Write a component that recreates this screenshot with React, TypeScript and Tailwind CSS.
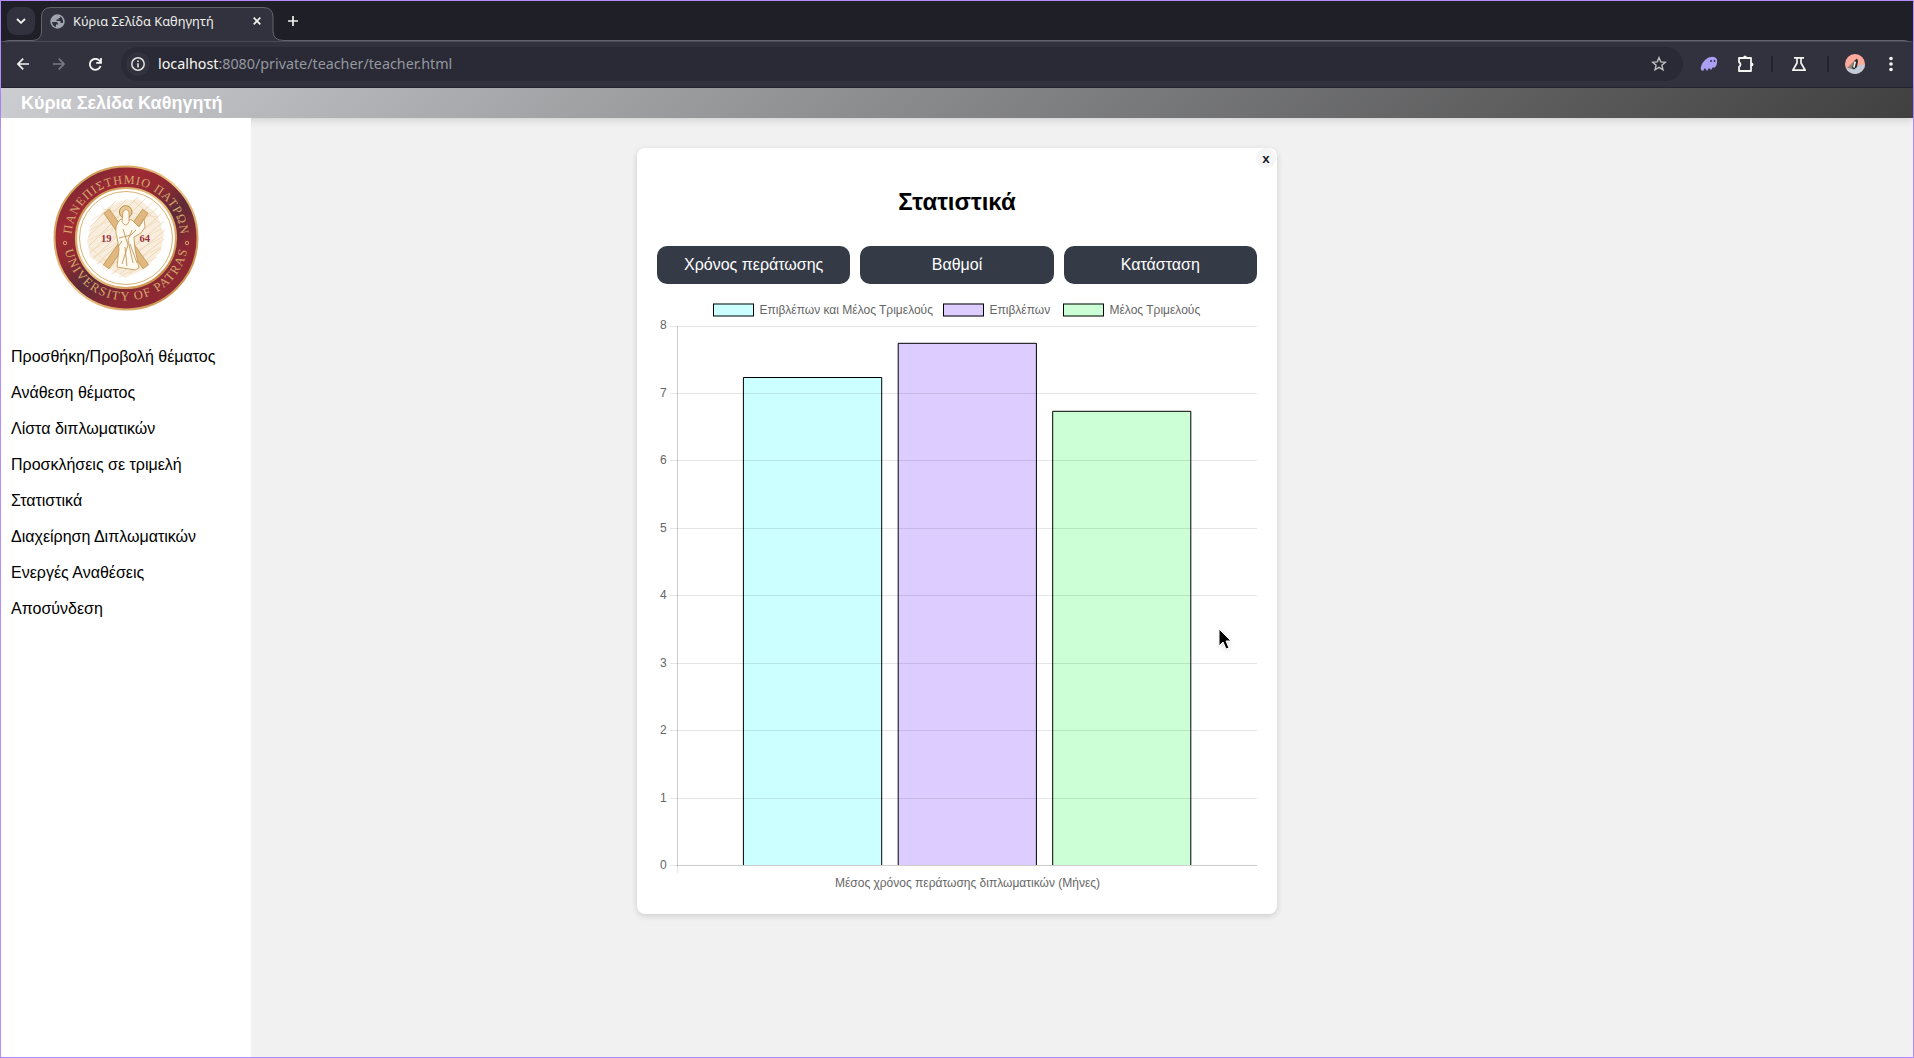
import React from "react";

const links = [
  "Προσθήκη/Προβολή θέματος",
  "Ανάθεση θέματος",
  "Λίστα διπλωματικών",
  "Προσκλήσεις σε τριμελή",
  "Στατιστικά",
  "Διαχείρηση Διπλωματικών",
  "Ενεργές Αναθέσεις",
  "Αποσύνδεση",
];

const bars = [
  { label: "Επιβλέπων και Μέλος Τριμελούς", left: 86.4, right: 224.7, top: 83.5, fill: "#00ffff", legendX: 56.5 },
  { label: "Επιβλέπων", left: 241.2, right: 379.4, top: 49.3, fill: "#5500ff", legendX: 286.5 },
  { label: "Μέλος Τριμελούς", left: 395.7, right: 533.8, top: 117.3, fill: "#00ff2b", legendX: 406.5 },
];

const ticks = [
  { v: 0, y: 571.5, base: 575 },
  { v: 1, y: 504.5, base: 508 },
  { v: 2, y: 436.5, base: 440 },
  { v: 3, y: 369.5, base: 373 },
  { v: 4, y: 301.5, base: 305 },
  { v: 5, y: 234.5, base: 238 },
  { v: 6, y: 166.5, base: 170 },
  { v: 7, y: 99.5, base: 103 },
  { v: 8, y: 32.5, base: 35 },
];

function Chart() {
  return (
    <svg width="600" height="600" className="block" fontFamily="'Liberation Sans', Arial, sans-serif" fontSize="12">
      {bars.map((b) => (
        <g key={b.label}>
          <rect x={b.legendX - 0.5} y="9.5" width="41" height="13" fill={b.fill} fillOpacity="0.2" />
          <rect x={b.legendX} y="10" width="40" height="12" fill="none" stroke="#000" />
          <text x={b.legendX + 46} y="20" fill="#666">{b.label}</text>
          <rect x={b.left} y={b.top} width={b.right - b.left} height={571 - b.top} fill={b.fill} fillOpacity="0.2" />
          <path d={`M${b.left} 571V${b.top}H${b.right}V571`} fill="none" stroke="#000" />
        </g>
      ))}
      {ticks.map((t) => (
        <g key={t.v}>
          <path d={`M13 ${t.y}H600`} stroke="#000" strokeOpacity="0.1" />
          <text x="9.6" y={t.base} textAnchor="end" fill="#666">{t.v}</text>
        </g>
      ))}
      <path d="M20.5 32V579" stroke="#000" strokeOpacity="0.1" />
      <path d="M20.5 32V572M20 571.5H600" stroke="#000" strokeOpacity="0.1" />
      <text x="310.5" y="593" textAnchor="middle" fill="#666">Μέσος χρόνος περάτωσης διπλωματικών (Μήνες)</text>
    </svg>
  );
}

function Seal() {
  return (
    <svg width="146" height="146" viewBox="0 0 146 146" fontFamily="'Liberation Serif', serif">
      <defs>
        <linearGradient id="ring" x1="0.1" y1="0" x2="0.9" y2="1">
          <stop offset="0" stopColor="#6b2632" />
          <stop offset="0.25" stopColor="#a02a34" />
          <stop offset="0.4" stopColor="#8f2a32" />
          <stop offset="0.55" stopColor="#5d2b37" />
          <stop offset="0.75" stopColor="#8c2832" />
          <stop offset="1" stopColor="#8f2a33" />
        </linearGradient>
        <linearGradient id="gold" x1="0" y1="0" x2="1" y2="1">
          <stop offset="0" stopColor="#c58b45" />
          <stop offset="0.5" stopColor="#efc98a" />
          <stop offset="1" stopColor="#bd7f3c" />
        </linearGradient>
        <path id="arcTop" d="M18.6 78A54.6 54.6 0 1 1 127.4 78" />
        <path id="arcBottom" d="M10.800 78A62.400 62.400 0 0 0 135.200 78" />
      </defs>
      <circle cx="73" cy="73" r="71.5" fill="url(#ring)" stroke="url(#gold)" strokeWidth="2" />
      <circle cx="73" cy="73" r="50" fill="#fff" stroke="url(#gold)" strokeWidth="2.2" />
      <circle cx="73" cy="73" r="46.5" fill="none" stroke="#dab272" strokeWidth="1" />
      <path d="M38 62L52 44L68 36L86 34L104 49L111 68L108 86L92 104L72 113L56 104L37 92L34 76Z" fill="#f7ead6" opacity="0.8" />
      <g stroke="#e5c99b" strokeWidth="1" fill="none" opacity="0.6">
        <path d="M37 62L63 36M35 72L74 34M36 81L85 32M37 88L92 34M40 94L100 37M44 99L104 43M49 102L108 49M53 106L111 56M59 109L112 65M67 109L111 74M76 109L108 83" />
        <path d="M39 55L60 42M35 66L68 50M36 75L91 48M38 86L96 50M40 92L104 56M44 99L108 64M50 104L110 72M58 109L108 82M66 112L104 92M36 82L54 97M80 35L109 60M49 44L105 52" strokeWidth="0.7" />
      </g>
      <g>
        <path d="M53.500 46L93 102M92.500 46L53 102" stroke="#c99b57" strokeWidth="7.500" />
        <path d="M53.900 46.600L92.600 101.400M92.100 46.600L53.400 101.400" stroke="#dfb981" strokeWidth="6" />
      </g>
      <circle cx="72.700" cy="47" r="6.300" fill="#e9cb98" stroke="#b98746" />
      <path d="M68 54C62 59 62 66 64 72L66 84L64 102L82 105L86 103L82 84L81 72L88 68L92 62L91 54L86 62L79 55Z" fill="#fffaf0" stroke="#c1904f" strokeWidth="0.8" />
      <path d="M70 47Q73 42 76 47L76 57Q73 63 69 57Z" fill="#fff8eb" stroke="#bb8848" strokeWidth="0.7" />
      <path d="M70 64L75 80L69 99M79 65L75 75L80 98M66 73L78 70L83 65M72 82L74 101M65 82L69 76M84 98L77 79" fill="none" stroke="#bd8c4b" strokeWidth="0.8" />
      <text x="48" y="76.500" fontSize="10.500" fontWeight="bold" fill="#98333d">19</text>
      <text x="86.500" y="76.500" fontSize="10.500" fontWeight="bold" fill="#98333d">64</text>
      <g fill="#d5a66c">
        <text fontSize="12.300"><textPath href="#arcTop" startOffset="50%" textAnchor="middle" textLength="163">ΠΑΝΕΠΙΣΤΗΜΙΟ ΠΑΤΡΩΝ</textPath></text>
        <text fontSize="12.600"><textPath href="#arcBottom" startOffset="50%" textAnchor="middle" textLength="171">UNIVERSITY OF PATRAS</textPath></text>
      </g>
      <circle cx="12" cy="78" r="1.700" fill="none" stroke="#d5a66c" />
      <circle cx="134" cy="78" r="1.700" fill="none" stroke="#d5a66c" />
    </svg>
  );
}

function TabStrip() {
  return (
    <div className="relative flex h-10 items-center bg-[#1f1f28] font-['Noto_Sans',sans-serif]">
      <svg className="absolute left-0 top-0" width="1912" height="41">
        <path d="M0 47Q0 40 8 39.500H31Q40 39.500 40.500 31V16Q40.500 6.500 50 6.500H262Q272 6.500 272 16V30Q272 39.500 283 39.500H1903Q1911 40 1911 47V41H0Z" fill="#31323e" stroke="#62636d" />
      </svg>
      <div className="relative ml-[6px] flex size-7 items-center justify-center rounded-[9px] bg-[#31323e]">
        <svg width="10" height="6" viewBox="0 0 10 6"><path d="M1 1l4 3.800L9 1" fill="none" stroke="#f4f4f0" strokeWidth="1.800" /></svg>
      </div>
      <svg className="relative ml-[15px]" width="15" height="15" viewBox="0 0 15 15">
        <circle cx="7.500" cy="7.500" r="7.200" fill="#a0a4ad" />
        <path d="M2 8H6C8 8 8 10 8 10.500H6V13C3.500 12.500 2 10 2 8M8 2H10V4H8.500V5.500H6.500V7H10.500V9H13L13 7Q12.500 3 9.500 2Z" fill="#31323e" />
      </svg>
      <span className="relative ml-[8px] text-[12.800px] leading-5 text-[#eeeeea]">Κύρια Σελίδα Καθηγητή</span>
      <svg className="absolute left-[252px] top-4" width="8" height="8" viewBox="0 0 8 8"><path d="M.700.700l6.600 6.600M7.300.700L.700 7.300" stroke="#f1f1ed" strokeWidth="1.700" /></svg>
      <svg className="absolute left-[287px] top-[15px]" width="10" height="10"><path d="M5 0v10M0 5h10" stroke="#f1f1ed" strokeWidth="1.700" /></svg>
    </div>
  );
}

function Toolbar() {
  return (
    <div className="flex h-[47px] items-center border-b border-[#252630] bg-[#31323e] font-['Noto_Sans',sans-serif]">
      <svg className="ml-4" width="12" height="12" viewBox="0 0 12 12" fill="none" stroke="#f4f4f0" strokeWidth="1.700"><path d="M12 6H1M6.200.600L.900 6l5.300 5.400" /></svg>
      <svg className="ml-6" width="12" height="12" viewBox="0 0 12 12" fill="none" stroke="#797a82" strokeWidth="1.700"><path d="M0 6h11M5.800.600L11.100 6l-5.300 5.400" /></svg>
      <svg className="ml-6" width="13" height="13" viewBox="0 0 13 13" fill="none" stroke="#f4f4f0" strokeWidth="1.800"><path d="M11.600 8A5.500 5.500 0 1 1 10.600 2.800L12 4.400M12 0v4.900H7.200" /></svg>
      <div className="ml-[19px] flex h-[34px] w-[1562px] items-center rounded-full bg-[#292a35] pl-[5px] pr-[16px]">
        <div className="flex size-6 items-center justify-center rounded-full bg-[#31323e]">
          <svg width="14" height="14" viewBox="0 0 14 14"><circle cx="7" cy="7" r="6.200" fill="none" stroke="#e4e4e1" strokeWidth="1.500" /><path d="M7 6.200V10.500M7 3.500V5" stroke="#e4e4e1" strokeWidth="1.600" /></svg>
        </div>
        <span className="mb-px ml-[8px] text-[14.300px] leading-5 text-[#9698a0]"><span className="text-[#f8f8f2]">localhost</span>:8080/private/teacher/teacher.html</span>
        <svg className="ml-auto" width="16" height="16" viewBox="0 0 16 16" fill="none" stroke="#c0c0bf" strokeWidth="1.400"><path d="M8 1.700l1.800 4.200 4.600.400-3.500 3 1.100 4.500L8 11.400l-4 2.400 1.100-4.500-3.500-3 4.600-.400z" /></svg>
      </div>
      <svg className="ml-[17px]" width="18" height="16" viewBox="0 0 18 16"><path d="M1 14Q0 9 5 4Q9 0 14 1Q18 2 17 7Q17 10 14 12L13 11L11 14L9 12L7 15L5 12L3 15Z" fill="#aaa0f3" /><path d="M11 4v2M14.500 4v2" stroke="#34334c" strokeWidth="1.500" /></svg>
      <svg className="ml-[19px]" width="18" height="18" viewBox="0 0 18 18"><path d="M2 3H14V16H2V12Q5 9.500 2 7Z" fill="none" stroke="#f4f4f0" strokeWidth="1.800" strokeLinejoin="round" /><path d="M6 3a2 2.500 0 0 1 4 0ZM14 7.500a2.500 2 0 0 1 0 4Z" fill="#f4f4f0" /></svg>
      <i className="ml-[16px] h-4 w-[2px] bg-[#22232c]" />
      <svg className="ml-[18px]" width="16" height="16" viewBox="0 0 16 16"><path d="M3 1.800H13M6 2V7L1.800 14.200H14.200L10 7V2" fill="none" stroke="#f4f4f0" strokeWidth="1.700" strokeLinejoin="round" /></svg>
      <i className="ml-[20px] h-4 w-[2px] bg-[#22232c]" />
      <svg className="ml-[16px]" width="20" height="20" viewBox="0 0 20 20"><defs><clipPath id="avatar"><circle cx="10" cy="10" r="10" /></clipPath></defs><g clipPath="url(#avatar)"><path d="M0 0H20V20H0Z" fill="#ffab9c" /><path d="M2 14L12 12L20 10V20H0Z" fill="#c3cad7" /><path d="M2 14L8 8L8 15Z" fill="#97827d" /><path d="M12 4.500L9 7L7 14L9 15.500L12 13L13 7Z" fill="#292b2c" /><path d="M9.500 7L8 13L9.500 14L11 8Z" fill="#f7f7f2" /></g></svg>
      <svg className="ml-[24px]" width="4" height="16" fill="#f4f4f0"><circle cx="2" cy="2.500" r="1.800" /><circle cx="2" cy="8" r="1.800" /><circle cx="2" cy="13.500" r="1.800" /></svg>
    </div>
  );
}

export default function App() {
  return (
    <div className="relative flex h-[1058px] w-[1914px] flex-col border border-[#b58cff] bg-[#f1f1f1] font-['Liberation_Sans',Arial,sans-serif] text-black">
      <TabStrip />
      <Toolbar />
      <header className="z-10 flex h-[30px] shrink-0 items-center bg-[linear-gradient(135deg,#cccdd1,#404040)] pl-5 text-[18px] font-bold text-white shadow-[0_2px_8px_rgba(0,0,0,0.15)]">
        Κύρια Σελίδα Καθηγητή
      </header>
      <div className="flex min-h-0 flex-1">
        <aside className="z-20 flex w-[250px] shrink-0 flex-col bg-white">
          <div className="mt-[47px] flex justify-center"><Seal /></div>
          <nav className="mt-[28px] flex flex-col pl-[10px] text-base">
            {links.map((l) => <a key={l} className="flex h-9 items-center whitespace-nowrap">{l}</a>)}
          </nav>
        </aside>
        <main className="flex-1">
          <section className="relative ml-[386px] mt-[30px] h-[766px] w-[640px] rounded-lg bg-white px-5 shadow-[0_2px_6px_rgba(0,0,0,0.15)]">
            <button className="absolute right-[1px] top-0 size-5 rounded-full bg-[#f5f5f5] pt-px text-[13.333px] leading-5 font-bold text-[#1c1c28]">x</button>
            <h2 className="pt-[40px] text-center text-2xl leading-[27px] font-bold">Στατιστικά</h2>
            <div className="mt-[31px] grid grid-cols-3 gap-[10px]">
              {["Χρόνος περάτωσης", "Βαθμοί", "Κατάσταση"].map((t) => (
                <button key={t} className="h-[38px] rounded-[10px] bg-[#343a46] text-base text-white">{t}</button>
              ))}
            </div>
            <div className="mt-[10px]"><Chart /></div>
          </section>
        </main>
      </div>
      <svg className="absolute left-[1217px] top-[627px]" width="16" height="24" viewBox="0 0 16 24"><path d="M1 1V18L5 14L8 21L11 20L8 13H13Z" fill="#000" stroke="#fff" strokeWidth="1" className="drop-shadow-sm" /></svg>
    </div>
  );
}
